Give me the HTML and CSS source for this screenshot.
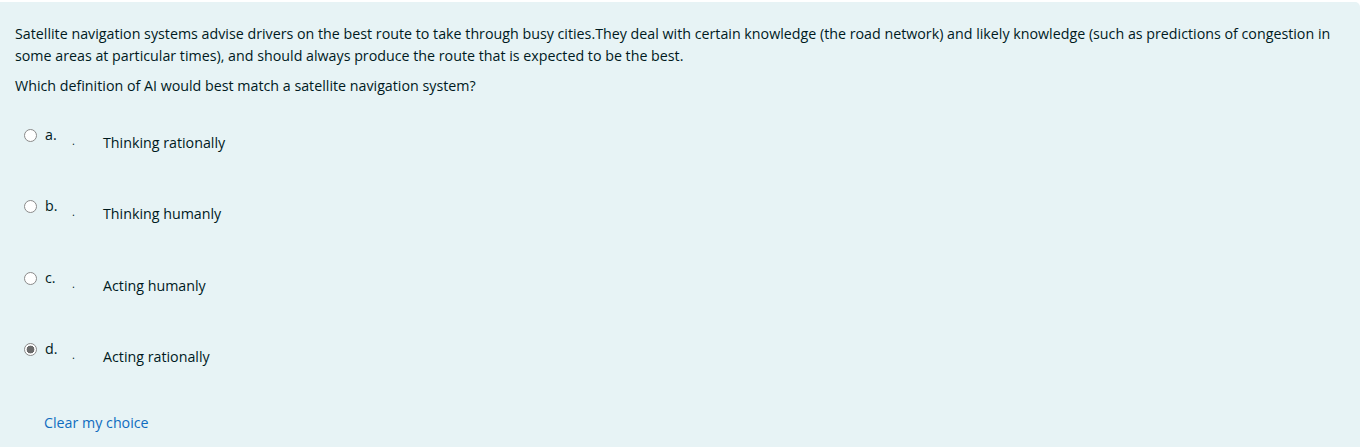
FILE: index.html
```html
<!DOCTYPE html>
<html>
<head>
<meta charset="utf-8">
<link rel="stylesheet" href="styles.css">
</head>
<body>
<div class="formulation">
  <div class="qtext">
    <p class="intro">Satellite navigation systems advise drivers on the best route to take through busy cities.They deal with certain knowledge (the road network) and likely knowledge (such as predictions of congestion in some areas at particular times), and should always produce the route that is expected to be the best.</p>
    <p class="prompt">Which definition of AI would best match a satellite navigation system?</p>
  </div>
  <div class="answers">
    <div class="option">
      <span class="radio"></span>
      <span class="letter">a.</span>
      <span class="dot">.</span>
      <span class="text">Thinking rationally</span>
    </div>
    <div class="option">
      <span class="radio"></span>
      <span class="letter">b.</span>
      <span class="dot">.</span>
      <span class="text">Thinking humanly</span>
    </div>
    <div class="option">
      <span class="radio"></span>
      <span class="letter">c.</span>
      <span class="dot">.</span>
      <span class="text">Acting humanly</span>
    </div>
    <div class="option">
      <span class="radio checked"></span>
      <span class="letter">d.</span>
      <span class="dot">.</span>
      <span class="text">Acting rationally</span>
    </div>
  </div>
  <a class="clear" href="#">Clear my choice</a>
</div>
</body>
</html>
```

FILE: styles.css
```css
html, body {
  margin: 0;
  padding: 0;
  background: #ffffff;
}
body {
  font-family: "Open Sans", "Noto Sans", sans-serif;
  font-size: 14.25px;
  color: #001a1e;
}
.formulation {
  margin-top: 2px;
  height: 460px;
  background: #e7f3f5;
  border-top-right-radius: 5px;
  padding: 21px 0 0 15px;
  box-sizing: border-box;
  width: 1360px;
}
.qtext p {
  margin: 0;
  line-height: 22px;
  padding-right: 12px;
}
.qtext .prompt {
  margin-top: 8px;
}
.answers {
  margin-top: 31px;
  display: flex;
  flex-direction: column;
  gap: 49.3px;
}
.option {
  display: flex;
  align-items: flex-start;
  height: 22px;
}
.radio {
  width: 11px;
  height: 11px;
  border: 1px solid #8a8a8a;
  border-radius: 50%;
  background: #fff;
  margin-left: 9px;
  margin-top: 1px;
  flex: none;
}
.radio.checked {
  background: radial-gradient(circle, #6a6a6a 0 3.6px, #fff 4.2px);
}
.letter {
  margin-left: 8px;
  line-height: 14px;
  width: 27px;
}
.dot {
  line-height: 22px;
  margin-top: 2px;
  font-size: 11px;
  width: 31px;
}
.text {
  margin-top: 4px;
  line-height: 22px;
}
.clear {
  display: inline-block;
  margin-top: 49px;
  margin-left: 29px;
  color: #0f6cbf;
  text-decoration: none;
}
```
